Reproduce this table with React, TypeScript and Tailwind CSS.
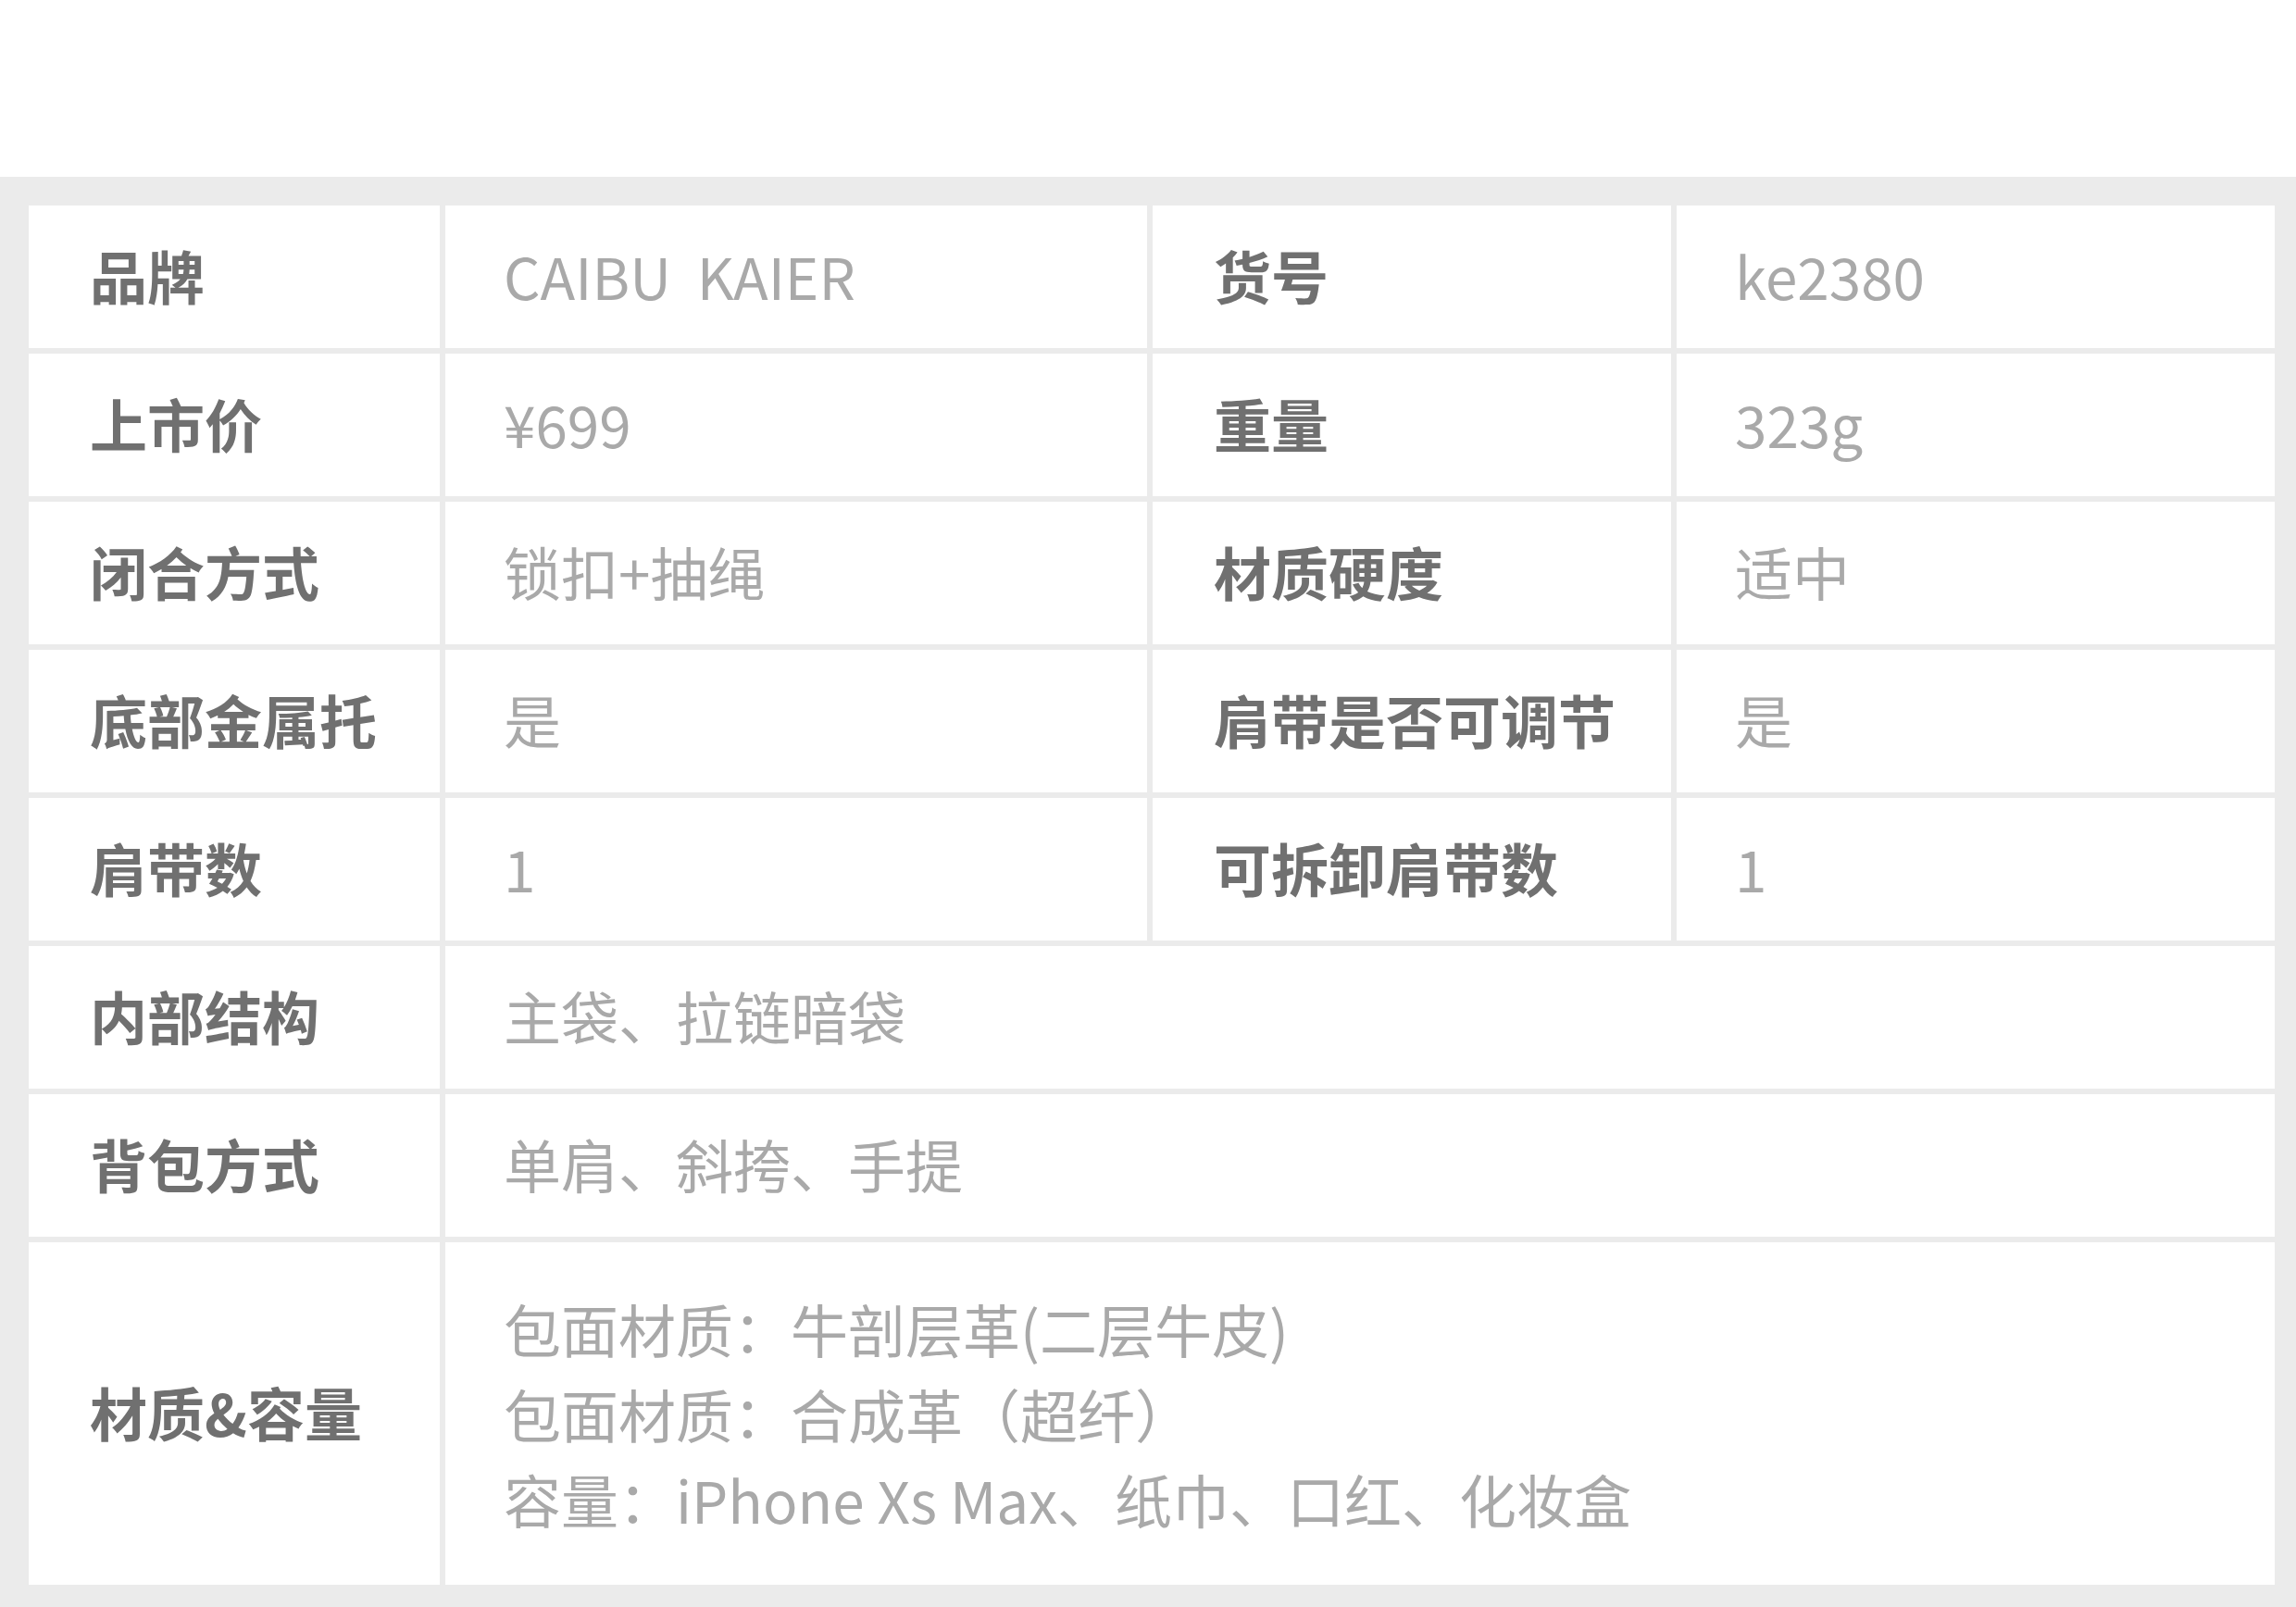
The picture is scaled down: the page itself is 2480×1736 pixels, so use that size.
const FONT = { fontFamily: '"Noto Sans CJK SC", "Noto Sans", sans-serif' }

type Pair = [string, string]

const pairRows: [Pair, Pair][] = [
  [
    ['品牌', 'CAIBU\u00a0\u00a0KAIER'],
    ['货号', 'ke2380'],
  ],
  [
    ['上市价', '¥699'],
    ['重量', '323g'],
  ],
  [
    ['闭合方式', '锁扣+抽绳'],
    ['材质硬度', '适中'],
  ],
  [
    ['底部金属托', '是'],
    ['肩带是否可调节', '是'],
  ],
  [
    ['肩带数', '1'],
    ['可拆卸肩带数', '1'],
  ],
]

const wideRows: Pair[] = [
  ['内部结构', '主袋、拉链暗袋'],
  ['背包方式', '单肩、斜挎、手提'],
]

const materialLines = [
  '包面材质：牛剖层革(二层牛皮)',
  '包面材质：合成革（超纤）',
  '容量：iPhone Xs Max、纸巾、口红、化妆盒',
]

const Label = ({ text, tall }: { text: string; tall?: boolean }) => (
  <div
    className={`flex items-center bg-white pb-[5px] pl-[66px] text-[62px] font-bold leading-none text-[#707070] ${
      tall ? 'h-[370px]' : 'h-[154px]'
    }`}
  >
    {text}
  </div>
)

const Value = ({ text, wide }: { text: string; wide?: boolean }) => (
  <div
    className={`flex h-[154px] items-center bg-white pb-[5px] pl-[63px] text-[62px] leading-none text-[#a9a9a9] ${
      wide ? 'col-span-3' : ''
    }`}
  >
    {text}
  </div>
)

export default function App() {
  return (
    <div className="w-[2480px] h-[1736px] bg-white" style={FONT}>
      <div className="h-[191px]" />
      <div className="bg-[#ebebeb] pl-[31px] pr-[23px] pt-[31px] pb-[24px]">
        <div className="grid grid-cols-[444px_758px_560px_646px] gap-[6px]">
          {pairRows.map(([left, right], i) => (
            <div key={i} className="contents">
              <Label text={left[0]} />
              <Value text={left[1]} />
              <Label text={right[0]} />
              <Value text={right[1]} />
            </div>
          ))}
          {wideRows.map(([label, value], i) => (
            <div key={`w${i}`} className="contents">
              <Label text={label} />
              <Value text={value} wide />
            </div>
          ))}
          <Label text="材质&容量" tall />
          <div className="col-span-3 flex h-[370px] flex-col justify-center bg-white pl-[63px] text-[62px] leading-[92px] text-[#a9a9a9]">
            {materialLines.map((line) => (
              <div key={line}>{line}</div>
            ))}
          </div>
        </div>
      </div>
    </div>
  )
}
